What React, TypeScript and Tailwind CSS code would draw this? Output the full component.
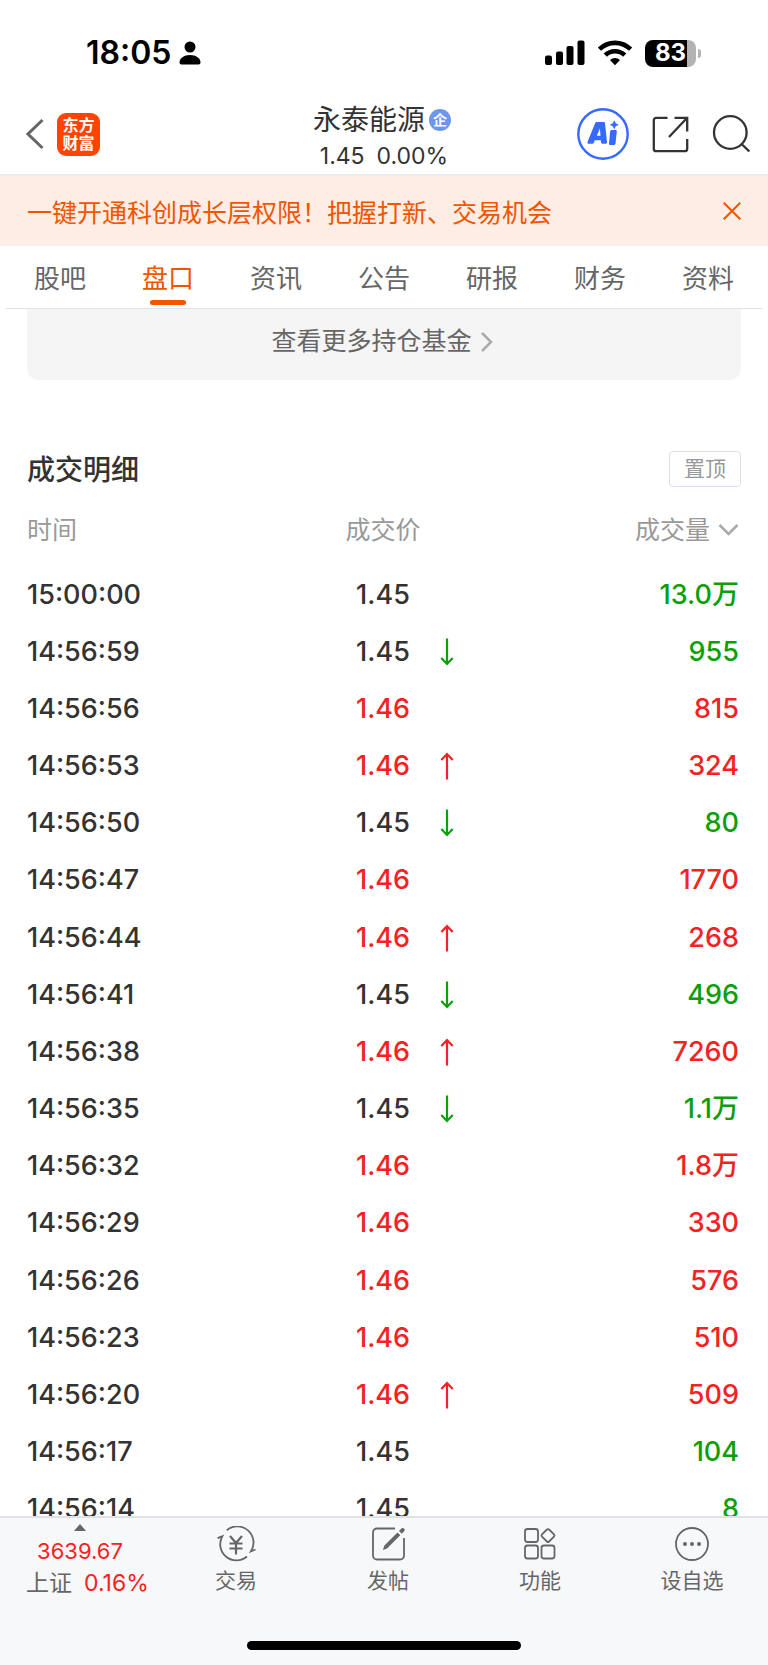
import type { ReactNode } from 'react';

type Tone = 'flat' | 'up' | 'down';

type Trade = {
  time: string;
  price: string;
  priceTone: Tone;
  arrow?: 'up' | 'down';
  volume: string;
  volumeTone: Tone;
};

const tabs = ['股吧', '盘口', '资讯', '公告', '研报', '财务', '资料'];
const activeTab = '盘口';

const trades: Trade[] = [
  { time: '15:00:00', price: '1.45', priceTone: 'flat', volume: '13.0万', volumeTone: 'down' },
  { time: '14:56:59', price: '1.45', priceTone: 'flat', arrow: 'down', volume: '955', volumeTone: 'down' },
  { time: '14:56:56', price: '1.46', priceTone: 'up', volume: '815', volumeTone: 'up' },
  { time: '14:56:53', price: '1.46', priceTone: 'up', arrow: 'up', volume: '324', volumeTone: 'up' },
  { time: '14:56:50', price: '1.45', priceTone: 'flat', arrow: 'down', volume: '80', volumeTone: 'down' },
  { time: '14:56:47', price: '1.46', priceTone: 'up', volume: '1770', volumeTone: 'up' },
  { time: '14:56:44', price: '1.46', priceTone: 'up', arrow: 'up', volume: '268', volumeTone: 'up' },
  { time: '14:56:41', price: '1.45', priceTone: 'flat', arrow: 'down', volume: '496', volumeTone: 'down' },
  { time: '14:56:38', price: '1.46', priceTone: 'up', arrow: 'up', volume: '7260', volumeTone: 'up' },
  { time: '14:56:35', price: '1.45', priceTone: 'flat', arrow: 'down', volume: '1.1万', volumeTone: 'down' },
  { time: '14:56:32', price: '1.46', priceTone: 'up', volume: '1.8万', volumeTone: 'up' },
  { time: '14:56:29', price: '1.46', priceTone: 'up', volume: '330', volumeTone: 'up' },
  { time: '14:56:26', price: '1.46', priceTone: 'up', volume: '576', volumeTone: 'up' },
  { time: '14:56:23', price: '1.46', priceTone: 'up', volume: '510', volumeTone: 'up' },
  { time: '14:56:20', price: '1.46', priceTone: 'up', arrow: 'up', volume: '509', volumeTone: 'up' },
  { time: '14:56:17', price: '1.45', priceTone: 'flat', volume: '104', volumeTone: 'down' },
  { time: '14:56:14', price: '1.45', priceTone: 'flat', volume: '8', volumeTone: 'down' },
];

const toneClass: Record<Tone, string> = {
  flat: 'text-[#333333]',
  up: 'text-[#f42222]',
  down: 'text-[#0aa00a]',
};

function StatusBar() {
  return (
    <div className="flex h-[88px] items-center justify-between pt-[18px] pr-[67px] pl-[86px] text-black">
      <div className="flex items-center gap-2">
        <span className="text-[32px] leading-10 font-semibold">18:05</span>
        <svg width="22" height="24" viewBox="0 0 22 24" fill="currentColor" aria-hidden="true">
          <circle cx="11" cy="6" r="5.5" />
          <path d="M2.5 23.500C1.300 23.500.5 22.800.5 21.500.5 17.200 5 14 11 14s10.500 3.200 10.500 7.500c0 1.300-.8 2-2 2z" />
        </svg>
      </div>
      <div className="flex items-center gap-3">
        <svg width="40" height="26" viewBox="0 0 40 26" fill="currentColor" aria-hidden="true">
          <rect x="0" y="15.500" width="7" height="9.500" rx="2" />
          <rect x="11" y="11.500" width="7" height="13.500" rx="2" />
          <rect x="21.500" y="6" width="7" height="19" rx="2" />
          <rect x="32.500" y="0.500" width="7" height="24.500" rx="2" />
        </svg>
        <svg width="36" height="26" viewBox="0 0 36 26" fill="none" stroke="currentColor" strokeWidth="4.600" aria-hidden="true">
          <path d="M2.400 9.200a22.500 22.500 0 0 1 31.200 0" />
          <path d="M8.300 15.200a14 14 0 0 1 19.400 0" />
          <path d="M18 25.200l-5-5.200a7.200 7.200 0 0 1 10 0z" fill="currentColor" stroke="none" />
        </svg>
        <div className="flex items-center gap-0.5">
          <div className="flex h-[27px] w-[51px] items-center justify-center overflow-hidden rounded-lg bg-linear-to-r from-black from-83% to-[#b3b3b3] to-83%">
            <span className="text-[24px] leading-none font-bold text-white">83</span>
          </div>
          <span className="h-[9px] w-[3px] rounded-r-full bg-[#b3b3b3]" />
        </div>
      </div>
    </div>
  );
}

function Header() {
  return (
    <header className="grid h-[88px] grid-cols-[1fr_auto_1fr] items-center border-b-2 border-[#ececee] px-[18px] text-[#333333]">
      <div className="flex items-center gap-[13px] pt-1.5 pl-2">
        <button type="button" aria-label="返回">
          <svg width="18" height="32" viewBox="0 0 18 32" fill="none" stroke="#666666" strokeWidth="3" aria-hidden="true">
            <path d="M16.500 2L2 16l14.500 14" />
          </svg>
        </button>
        <a
          href="#home"
          className="flex size-[43px] items-center justify-center rounded-[9px] bg-[#ff4400] text-center text-[16px] leading-[18px] font-bold text-white"
        >
          东方
          <br />
          财富
        </a>
      </div>
      <div className="flex flex-col items-center pt-3.5 pr-1">
        <div className="flex items-center gap-1">
          <h1 className="text-[28px] leading-9">永泰能源</h1>
          <span className="flex size-[22px] items-center justify-center rounded-full bg-[#6c97ea] text-[14px] leading-none font-bold text-white">
            企
          </span>
        </div>
        <p className="flex gap-3 pl-1 text-[23px] leading-9">
          <span>1.45</span>
          <span>0.00%</span>
        </p>
      </div>
      <div className="flex items-center justify-end gap-[23px] pt-1.5">
        <button type="button" aria-label="AI">
          <svg width="52" height="52" viewBox="0 0 52 52" aria-hidden="true">
            <circle cx="26" cy="26" r="24.700" fill="none" stroke="#3669ff" strokeWidth="2.400" />
            <path
              d="M20 14h6.500c.9 0 1.400.5 1.500 1.300l2 18.700c.1 1-.4 1.700-1.400 1.700h-3.100c-.9 0-1.400-.5-1.500-1.400l-.2-2.100h-6l-.9 2.300c-.3.800-.8 1.200-1.600 1.200h-3.500c-1.200 0-1.700-.8-1.300-1.800l7.500-18.400c.4-1 1-1.500 2-1.500zm2.900 6.500l-3.100 7.300h3.700zM34.500 22h4c.9 0 1.400.6 1.300 1.500l-1.300 12c-.1.900-.7 1.500-1.600 1.500h-3.600c-.9 0-1.400-.6-1.300-1.500l1.100-12c.1-.9.600-1.500 1.400-1.500zM37.300 12.300l1.500 2.900 3 1.500-3 1.500-1.500 3-1.500-3-3-1.500 3-1.500z"
              fill="#3669ff"
              fillRule="evenodd"
            />
          </svg>
        </button>
        <button type="button" aria-label="分享">
          <svg width="37" height="37" viewBox="0 0 37 37" fill="none" stroke="currentColor" strokeWidth="2.300" aria-hidden="true">
            <path d="M15.500 1.800H4.300a2.500 2.500 0 0 0-2.500 2.500v28.400a2.500 2.500 0 0 0 2.500 2.500h28.400a2.500 2.500 0 0 0 2.500-2.500V23" />
            <path d="M22.500 1.800h12.700V15.500M35.200 1.800L17 21" />
          </svg>
        </button>
        <button type="button" aria-label="搜索">
          <svg width="38" height="38" viewBox="0 0 38 38" fill="none" stroke="currentColor" strokeWidth="2.300" aria-hidden="true">
            <circle cx="18.300" cy="17.500" r="16.300" />
            <path d="M29 28.500l8.300 8" />
          </svg>
        </button>
      </div>
    </header>
  );
}

function Banner() {
  return (
    <div className="flex h-[70px] items-center justify-between bg-[#feede5] px-[27px] text-[#f05500]">
      <a href="#open" className="pt-[3px] text-[25px] leading-9">
        一键开通科创成长层权限！把握打新、交易机会
      </a>
      <button type="button" aria-label="关闭">
        <svg width="18" height="18" viewBox="0 0 18 18" fill="none" stroke="currentColor" strokeWidth="2" aria-hidden="true">
          <path d="M.7.700l16.600 16.600M17.300.700L.7 17.300" />
        </svg>
      </button>
    </div>
  );
}

function Tabs() {
  return (
    <nav className="mx-1.5 grid h-[63px] shrink-0 grid-cols-7 border-b border-[#e2e2e2]">
      {tabs.map((tab) => (
        <a
          key={tab}
          href={`#${tab}`}
          className={`flex flex-col items-center justify-between pt-[13px] pb-[3px] text-[26px] leading-10 ${
            tab === activeTab ? 'text-[#f05500]' : 'text-[#666666]'
          }`}
        >
          {tab}
          {tab === activeTab && <span className="h-[5px] w-9 rounded-full bg-[#f05500]" />}
        </a>
      ))}
    </nav>
  );
}

function Arrow({ direction }: { direction: 'up' | 'down' }) {
  return (
    <svg
      width="14"
      height="28"
      viewBox="0 0 14 28"
      fill="none"
      stroke="currentColor"
      strokeWidth="2.200"
      className={direction === 'up' ? 'text-[#f42222]' : 'text-[#0aa00a]'}
      role="img"
      aria-label={direction === 'up' ? '上涨' : '下跌'}
    >
      <path d={direction === 'up' ? 'M7 27.500V2M1.300 8L7 2l5.700 6' : 'M7 .5V26M1.300 20L7 26l5.700-6'} />
    </svg>
  );
}

function TradeTable() {
  return (
    <table className="mt-2 h-[1042px] w-full table-fixed text-[27px] leading-9 font-medium">
      <thead>
        <tr className="h-[70px] text-[25px] text-[#999999]">
          <th scope="col" className="pb-0.5 text-left font-normal">
            时间
          </th>
          <th scope="col" className="pr-0.5 pb-0.5 text-center font-normal">
            成交价
          </th>
          <th scope="col" className="pr-0.5 pb-0.5 text-right font-normal">
            <button type="button" className="inline-flex items-center gap-2">
              成交量
              <svg width="21" height="14" viewBox="0 0 21 14" fill="none" stroke="#aaaaaa" strokeWidth="2.500" aria-hidden="true">
                <path d="M1.500 2l9 9 9-9" />
              </svg>
            </button>
          </th>
        </tr>
      </thead>
      <tbody>
        {trades.map((trade) => (
          <tr key={trade.time} className="h-[57px]">
            <td className="text-[#333333]">{trade.time}</td>
            <td className="pr-0.5">
              <div className="grid grid-cols-[1fr_auto_1fr] items-center">
                <span className={`col-start-2 ${toneClass[trade.priceTone]}`}>{trade.price}</span>
                <span className="pl-[30px]">{trade.arrow && <Arrow direction={trade.arrow} />}</span>
              </div>
            </td>
            <td className={`pr-0.5 text-right ${toneClass[trade.volumeTone]}`}>{trade.volume}</td>
          </tr>
        ))}
      </tbody>
    </table>
  );
}

function FooterAction({ label, children }: { label: string; children: ReactNode }) {
  return (
    <button type="button" className="flex flex-col items-center gap-[3px] pt-2 text-[21px] leading-8">
      <svg width="40" height="36" viewBox="0 0 40 36" fill="none" stroke="currentColor" strokeWidth="1.800" aria-hidden="true">
        {children}
      </svg>
      {label}
    </button>
  );
}

function Footer() {
  return (
    <footer className="flex h-[149px] shrink-0 flex-col justify-between border-t-2 border-[#dfe1e6] bg-[#f7f8fa] pb-[15px] text-[#666666]">
      <div className="grid grid-cols-[160px_repeat(4,1fr)] items-start">
        <a href="#index" className="flex flex-col items-center pt-1.5 text-[23px] leading-8">
          <svg width="12" height="7" viewBox="0 0 12 7" fill="currentColor" aria-hidden="true">
            <path d="M6 0l6 7H0z" />
          </svg>
          <span className="pt-1 text-[22px] text-[#fa2020]">3639.67</span>
          <span className="flex gap-3 self-start pl-[26px] whitespace-nowrap">
            上证 <span className="text-[#fa2020]">0.16%</span>
          </span>
        </a>
        <FooterAction label="交易">
          <path d="M10.800 4.300A16.200 16.200 0 0 1 35 25.300l4.500-1.800M31 30.500A16.200 16.200 0 0 1 6.300 10.300L1.500 12.200" />
          <path d="M14 10l6 7 6-7M20 17v11.500M13.500 17.500h13M13.500 22.500h13" strokeWidth="2.200" />
        </FooterAction>
        <FooterAction label="发帖">
          <path d="M27 2.500H9a4 4 0 0 0-4 4v23a4 4 0 0 0 4 4h23a4 4 0 0 0 4-4V12" />
          <path d="M15 24l1.200-4.200L29.500 6.500l2.800 2.800L19 22.600zM31 5l2.700-2.700c1.700-1.200 3.900 1 2.700 2.700l-2.700 2.800z" fill="currentColor" stroke="none" />
        </FooterAction>
        <FooterAction label="功能">
          <rect x="5" y="3" width="13" height="13" rx="2.500" />
          <rect x="5" y="19.500" width="13" height="13" rx="2.500" />
          <rect x="21.500" y="19.500" width="13" height="13" rx="2.500" />
          <rect x="23" y="4.500" width="10" height="10" rx="1.500" transform="rotate(45 28 9.500)" />
        </FooterAction>
        <FooterAction label="设自选">
          <circle cx="20" cy="18" r="16" />
          <g fill="currentColor" stroke="none">
            <circle cx="13" cy="18" r="2" />
            <circle cx="20" cy="18" r="2" />
            <circle cx="27" cy="18" r="2" />
          </g>
        </FooterAction>
      </div>
      <div className="mx-auto h-[9px] w-[274px] rounded-full bg-black" />
    </footer>
  );
}

export default function App() {
  return (
    <div className="flex h-screen flex-col bg-white font-['Inter','Noto_Sans_CJK_SC',sans-serif]">
      <StatusBar />
      <Header />
      <Banner />
      <Tabs />
      <main className="min-h-0 flex-1 overflow-hidden px-[27px]">
        <a
          href="#funds"
          className="-mt-2 flex h-[79px] items-center justify-center gap-2 rounded-xl bg-[#f5f5f5] pt-0.5 pr-1 text-[25px] text-[#666666]"
        >
          查看更多持仓基金
          <svg width="13" height="20" viewBox="0 0 13 20" fill="none" stroke="#aaaaaa" strokeWidth="2.500" aria-hidden="true">
            <path d="M2 1l9 9-9 9" />
          </svg>
        </a>
        <section>
          <div className="mt-[70px] flex items-center justify-between">
            <h2 className="pt-0.5 text-[28px] leading-9 font-medium text-[#333333]">成交明细</h2>
            <button type="button" className="h-9 w-[72px] rounded-sm border border-[#dcdfe8] text-[21px] leading-8 text-[#999999]">
              置顶
            </button>
          </div>
          <TradeTable />
        </section>
      </main>
      <Footer />
    </div>
  );
}
